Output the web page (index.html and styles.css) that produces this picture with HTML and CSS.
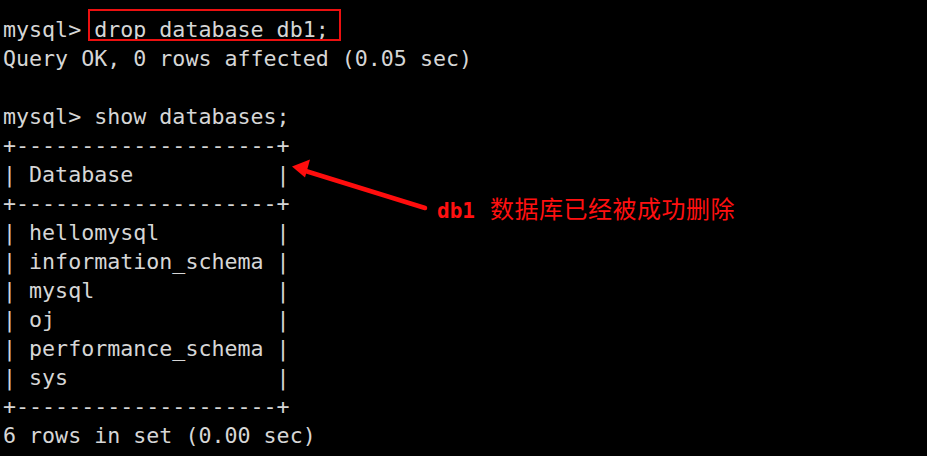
FILE: index.html
```html
<!DOCTYPE html>
<html>
<head>
<meta charset="utf-8">
<link rel="stylesheet" href="styles.css">
</head>
<body>
<div class="term">
<div class="out">
<div class="ln">mysql&gt; drop database db1;</div>
<div class="ln">Query OK, 0 rows affected (0.05 sec)</div>
<div class="ln"> </div>
<div class="ln">mysql&gt; show databases;</div>
<div class="ln">+--------------------+</div>
<div class="ln">| Database           |</div>
<div class="ln">+--------------------+</div>
<div class="ln">| hellomysql         |</div>
<div class="ln">| information_schema |</div>
<div class="ln">| mysql              |</div>
<div class="ln">| oj                 |</div>
<div class="ln">| performance_schema |</div>
<div class="ln">| sys                |</div>
<div class="ln">+--------------------+</div>
<div class="ln">6 rows in set (0.00 sec)</div>
</div>
<div class="hl-box"></div>
<svg class="arrow" width="927" height="456" viewBox="0 0 927 456">
  <line x1="425" y1="208" x2="304" y2="170.5" stroke="#ff0d0d" stroke-width="4.5" stroke-linecap="round"/>
  <polygon points="292,166.5 310,159.5 305,177.5" fill="#ff0d0d"/>
</svg>
<div class="note"><span class="note-id">db1</span><span class="note-cn">数据库已经被成功删除</span></div>
</div>
</body>
</html>
```
FILE: styles.css
```css
html, body {
  margin: 0;
  padding: 0;
  background: #000;
}
.term {
  position: relative;
  width: 927px;
  height: 456px;
  background: #000;
  overflow: hidden;
}
.out {
  display: flex;
  flex-direction: column;
  align-items: flex-start;
  padding: 15px 0 0 3px;
  font-family: "DejaVu Sans Mono", "Liberation Mono", monospace;
  font-size: 21.65px;
  line-height: 29px;
  color: #d6d6d6;
}
.ln {
  white-space: pre;
  height: 29px;
}
.hl-box {
  position: absolute;
  left: 88px;
  top: 8.5px;
  width: 249px;
  height: 28.5px;
  border: 2.5px solid #ec1010;
}
.arrow {
  position: absolute;
  left: 0;
  top: 0;
}
.note {
  position: absolute;
  left: 437px;
  top: 193px;
  line-height: 30px;
  color: #ff1010;
  white-space: nowrap;
}
.note-id {
  font-family: "DejaVu Sans Mono", "Liberation Mono", monospace;
  font-weight: bold;
  font-size: 21px;
  margin-right: 15px;
}
.note-cn {
  font-family: "Noto Sans CJK SC", sans-serif;
  font-size: 24px;
  letter-spacing: 0.5px;
}
```
